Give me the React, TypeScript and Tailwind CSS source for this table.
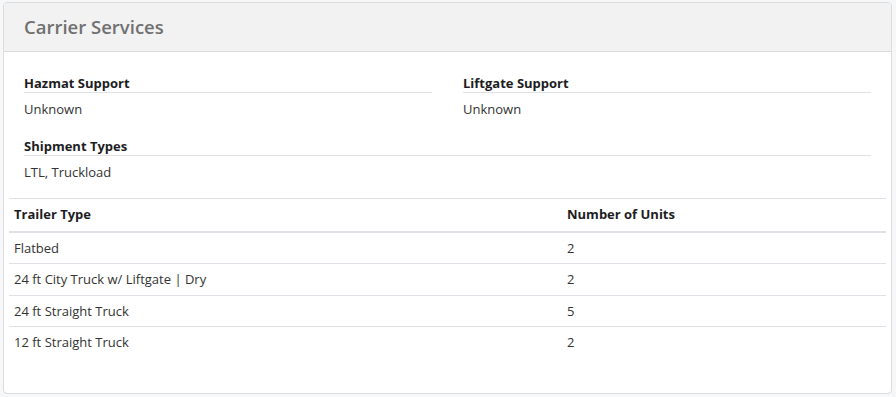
const font = { fontFamily: '"Open Sans", "Noto Sans", sans-serif' };

type Trailer = { type: string; units: number };

const trailers: Trailer[] = [
  { type: "Flatbed", units: 2 },
  { type: "24 ft City Truck w/ Liftgate | Dry", units: 2 },
  { type: "24 ft Straight Truck", units: 5 },
  { type: "12 ft Straight Truck", units: 2 },
];

function Field({ label, value, wide }: { label: string; value: string; wide?: boolean }) {
  return (
    <div className={wide ? "col-span-2" : ""}>
      <div className="border-b border-[#dee2e6] text-[13px] leading-[18px] font-bold text-[#1d1d1f]">
        {label}
      </div>
      <div className="mt-[7px] text-[13px] leading-[18px] text-[#333]">{value}</div>
    </div>
  );
}

export default function App() {
  return (
    <main className="min-h-screen bg-[#f6f7f9] pt-[2px] pl-[3px] pr-[4px] pb-[4px]" style={font}>
      <section className="rounded-[4px] border border-[#dcdcdc] bg-white overflow-hidden">
        <header className="h-[49px] border-b border-[#dcdcdc] bg-[#f2f2f2] px-[20px] flex items-center">
          <h2 className="text-[18.5px] font-semibold text-[#707070] leading-none">Carrier Services</h2>
        </header>

        <div className="px-[5px] pt-[22px] pb-[35px]">
          <div className="px-[15px] grid grid-cols-2 gap-x-[31px] gap-y-[19px]">
            <Field label="Hazmat Support" value="Unknown" />
            <Field label="Liftgate Support" value="Unknown" />
            <Field label="Shipment Types" value="LTL, Truckload" wide />
          </div>

          <table className="mt-[17px] w-full border-collapse text-[13px] text-[#333]">
            <thead>
              <tr className="border-t border-[#dee2e6] border-b-2">
                <th className="w-[553px] h-[33px] px-[5px] text-left font-bold text-[#1d1d1f]">Trailer Type</th>
                <th className="h-[33px] px-[5px] text-left font-bold text-[#1d1d1f]">Number of Units</th>
              </tr>
            </thead>
            <tbody>
              {trailers.map((t, i) => (
                <tr key={t.type} className={i > 0 ? "border-t border-[#dee2e6]" : ""}>
                  <td className="px-[5px] py-[6px] leading-[18.5px]">{t.type}</td>
                  <td className="px-[5px] py-[6px] leading-[18.5px]">{t.units}</td>
                </tr>
              ))}
            </tbody>
          </table>
        </div>
      </section>
    </main>
  );
}
